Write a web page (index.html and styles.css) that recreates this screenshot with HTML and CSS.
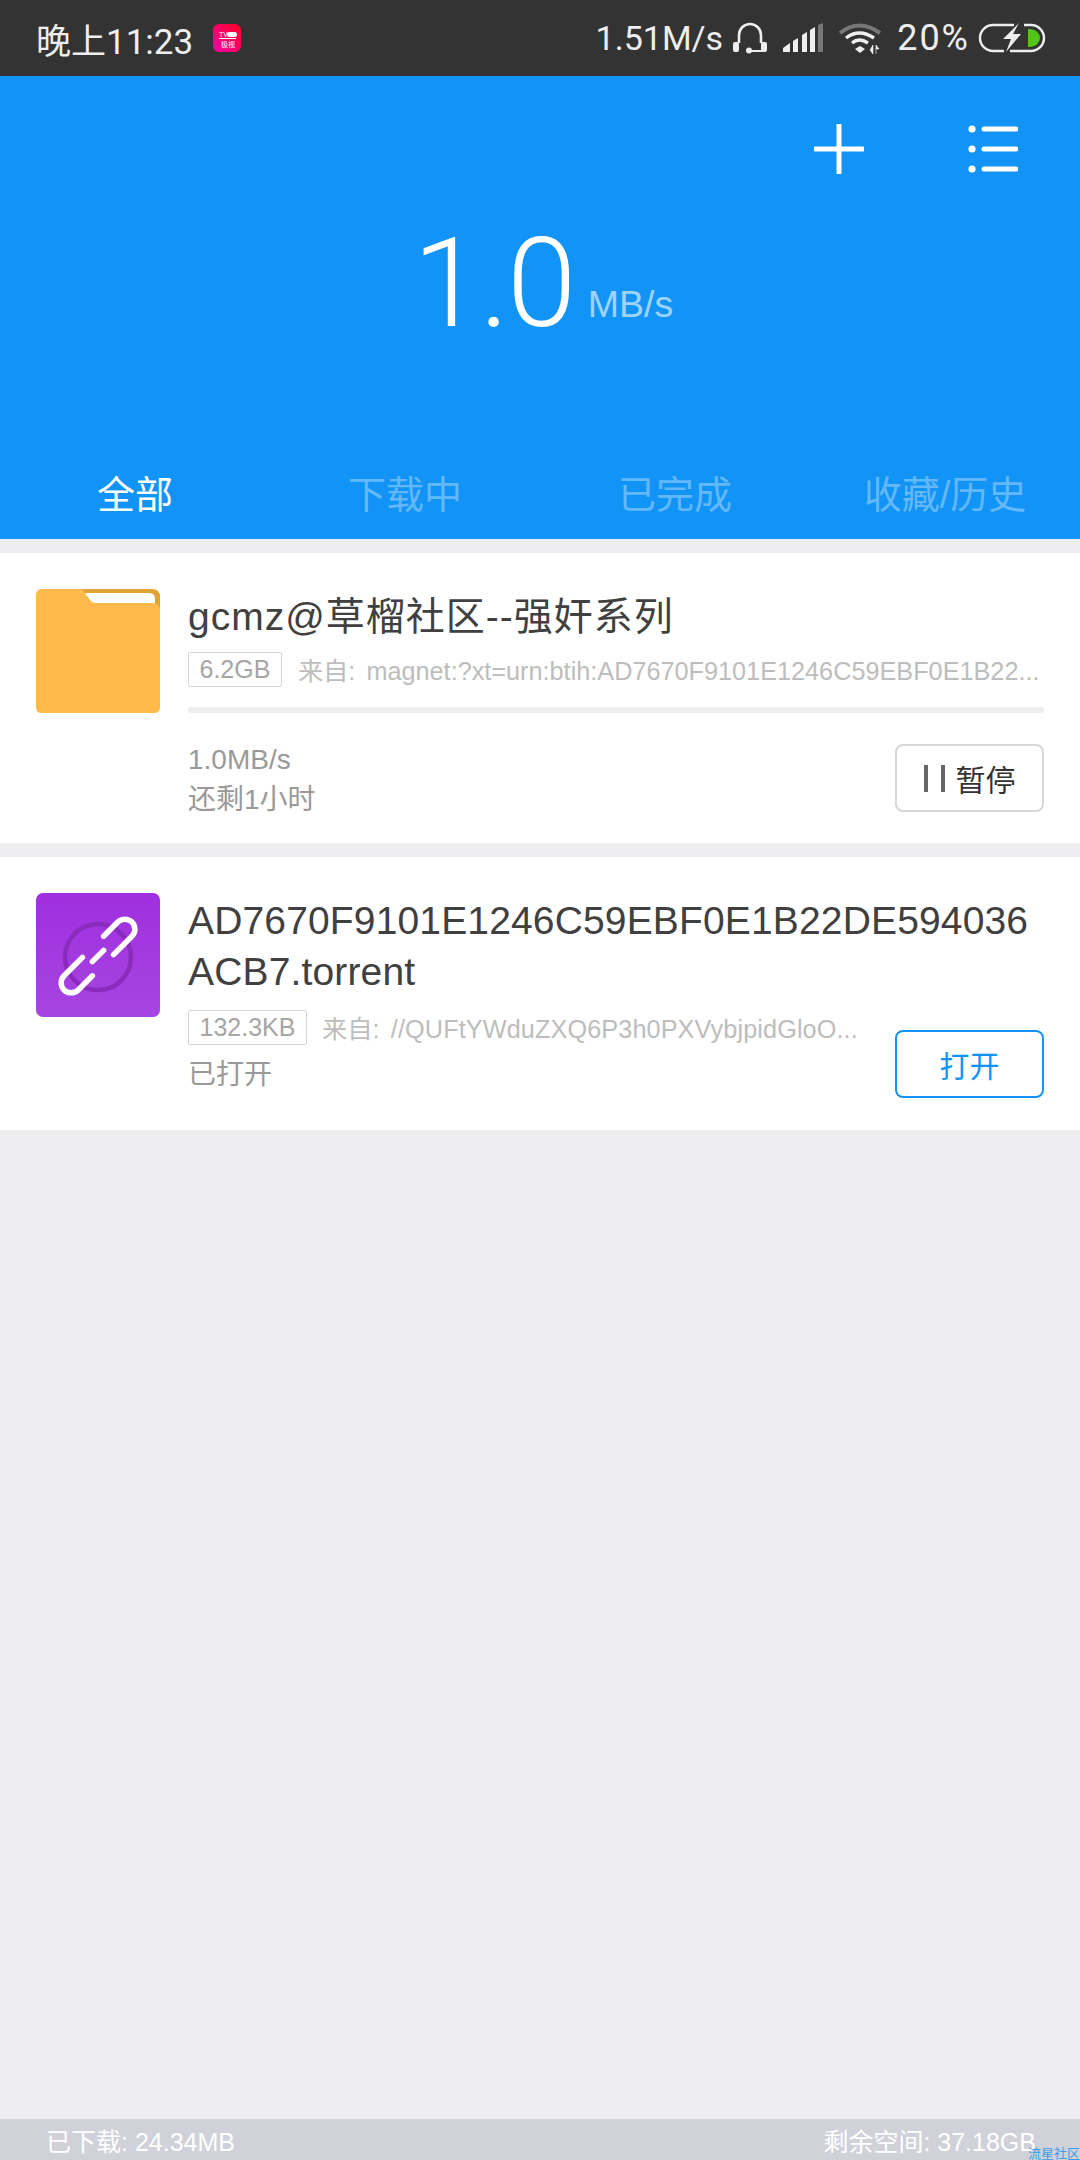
FILE: index.html
```html
<!DOCTYPE html>
<html lang="zh-CN">

<head>
    <meta charset="UTF-8">
    <meta name="viewport" content="width=device-width, initial-scale=1.0">
    <title>下载</title>
    <link rel="stylesheet" href="styles.css">
</head>

<body>
    <div class="page">
        <!-- status bar -->
        <div class="status-bar">
            <span class="status-time">晚上11:23</span>
            <svg class="app-icon" viewBox="0 0 28 28">
                <defs>
                    <linearGradient id="appGrad" x1="0" y1="1" x2="1" y2="0">
                        <stop offset="0" stop-color="#f400a8" />
                        <stop offset="1" stop-color="#ff0022" />
                    </linearGradient>
                </defs>
                <rect width="28" height="28" rx="6" fill="url(#appGrad)" />
                <rect x="14" y="8" width="10" height="5" rx="2.5" fill="#fff" />
                <text x="6" y="13" class="app-icon-text">TV</text>
                <rect x="6" y="14" width="17" height="1" fill="#fff" />
                <text x="8" y="23" class="app-icon-text">极视</text>
            </svg>
            <span class="status-speed">1.51M/s</span>
            <svg class="icon-headset" viewBox="0 0 36 32">
                <path d="M7 21V13a11 11 0 0 1 22 0v8" fill="none" stroke="#eee" stroke-width="2.6" />
                <rect x="1" y="20" width="6" height="10" rx="2" fill="#eee" />
                <rect x="29" y="20" width="6" height="10" rx="2" fill="#eee" />
                <circle cx="17" cy="28.5" r="3" fill="#eee" />
                <path d="M17 29h14" stroke="#eee" stroke-width="2" />
            </svg>
            <svg class="icon-signal" viewBox="0 0 40 30">
                <polygon points="0,29 0,25 7,20 7,29" fill="#eee" />
                <polygon points="10,29 10,18 15,15 15,29" fill="#eee" />
                <polygon points="19,29 19,12 24,9 24,29" fill="#eee" />
                <polygon points="27,29 27,7 32,4 32,29" fill="#eee" />
                <polygon points="35,29 35,2 40,0 40,29" fill="#777" />
            </svg>
            <svg class="icon-wifi" viewBox="0 0 44 32">
                <path d="M2 11Q21 -4 42 11" fill="none" stroke="#777" stroke-width="4" />
                <path d="M8 16Q21 6 36 16" fill="none" stroke="#eee" stroke-width="3.4" />
                <path d="M14 21Q21 15 30 21" fill="none" stroke="#eee" stroke-width="3.4" />
                <path d="M17 27l5-3 5 3-5 4z" fill="#eee" />
                <path d="M35 23v9l-3-4zM38 23l3 4-3 0zM38 26v6" fill="#eee" stroke="#eee" stroke-width=".6" />
            </svg>
            <span class="status-battery">20%</span>
            <svg class="icon-battery" viewBox="0 0 68 30">
                <path d="M36 2H15a13 13 0 0 0 0 26H26M32 28H53a13 13 0 0 0 0-26H46" fill="none" stroke="#eee" stroke-width="2.4" />
                <polygon points="41,0 25,16 33,16 28,29 43,11 35,11" fill="#eee" />
                <path d="M50 6h2a10 9 0 0 1 0 18h-2z" fill="#52c41a" />
            </svg>
        </div>

        <!-- blue header -->
        <div class="header">
            <div class="header-actions">
                <svg class="icon-plus" viewBox="0 0 50 50">
                    <path d="M25 1v48M1 25h48" stroke="#fff" stroke-width="5" stroke-linecap="round" />
                </svg>
                <svg class="icon-menu" viewBox="0 0 50 50">
                    <circle cx="4" cy="5" r="3.6" fill="#fff" />
                    <circle cx="4" cy="25" r="3.6" fill="#fff" />
                    <circle cx="4" cy="45" r="3.6" fill="#fff" />
                    <path d="M16 5h32M16 25h32M16 45h32" stroke="#fff" stroke-width="5" stroke-linecap="round" />
                </svg>
            </div>
            <div class="speed">
                <span class="speed-value">1.0</span>
                <span class="speed-unit">MB/s</span>
            </div>
            <div class="tabs">
                <div class="tab tab-active">全部</div>
                <div class="tab">下载中</div>
                <div class="tab">已完成</div>
                <div class="tab">收藏/历史</div>
            </div>
        </div>

        <!-- task list -->
        <div class="list">
            <div class="card card-folder">
                <svg class="file-icon" viewBox="0 0 124 124">
                    <path d="M40 0H116Q124 0 124 8V30H40z" fill="#e0a435" />
                    <path d="M48 4H113Q119 4 119 10V16H50z" fill="#fff" />
                    <path d="M6 0H46L54 11Q56 14 60 14H116Q124 14 124 22V118Q124 124 118 124H6Q0 124 0 118V6Q0 0 6 0z" fill="#ffba4b" />
                </svg>
                <div class="card-main">
                    <div class="card-title folder-title">gcmz@草榴社区--强奸系列</div>
                    <div class="meta">
                        <span class="size-tag">6.2GB</span>
                        <span class="source">来自: magnet:?xt=urn:btih:AD7670F9101E1246C59EBF0E1B22...</span>
                    </div>
                    <div class="progress"></div>
                    <div class="card-bottom">
                        <div class="stats">
                            <div>1.0MB/s</div>
                            <div>还剩1小时</div>
                        </div>
                        <button class="btn">
                            <span class="pause-icon"></span>
                            暂停
                        </button>
                    </div>
                </div>
            </div>

            <div class="card card-torrent">
                <svg class="file-icon" viewBox="0 0 124 124">
                    <defs>
                        <linearGradient id="linkGrad" x1="0" y1="0" x2="0" y2="1">
                            <stop offset="0" stop-color="#a02fdf" />
                            <stop offset="1" stop-color="#a645e0" />
                        </linearGradient>
                    </defs>
                    <rect width="124" height="124" rx="7" fill="url(#linkGrad)" />
                    <circle cx="62" cy="64" r="33" fill="none" stroke="#8a2bbd" stroke-width="4.5" />
                    <g transform="rotate(-45 62 63)" fill="none" stroke="#fff" stroke-width="5.5" stroke-linecap="round">
                        <path d="M50 53H24a10 10 0 0 0 0 20H44" />
                        <path d="M74 73H100a10 10 0 0 0 0-20H80" />
                        <path d="M54 63H70" />
                    </g>
                </svg>
                <div class="card-grid">
                    <div class="card-title torrent-title">AD7670F9101E1246C59EBF0E1B22DE594036<br>ACB7.torrent</div>
                    <div class="meta torrent-meta">
                        <span class="size-tag">132.3KB</span>
                        <span class="source">来自: //QUFtYWduZXQ6P3h0PXVybjpidGloO...</span>
                    </div>
                    <div class="opened">已打开</div>
                    <button class="btn btn-open">打开</button>
                </div>
            </div>
        </div>

        <!-- storage footer -->
        <div class="footer">
            <span>已下载: 24.34MB</span>
            <span>剩余空间: 37.18GB</span>
            <span class="watermark">流星社区</span>
        </div>
    </div>
</body>

</html>
```

FILE: styles.css
```css
* {
    box-sizing: border-box;
}

body {
    margin: 0;
    font-family: "Liberation Sans", "Noto Sans CJK SC", sans-serif;
}

.page {
    position: relative;
    width: 1080px;
    height: 2160px;
    display: flex;
    flex-direction: column;
    background-color: #eeeef0;
}

/* status bar */
.status-bar {
    height: 76px;
    flex-shrink: 0;
    display: flex;
    align-items: center;
    padding: 0 34px 0 36px;
    background-color: #333333;
    color: #eeeeee;
    font-family: Roboto, "Noto Sans CJK SC", sans-serif;
    font-size: 35px;
}

.status-time {
    width: 150px;
    white-space: nowrap;
}

.app-icon {
    width: 28px;
    height: 28px;
    margin-left: 27px;
}

.app-icon-text {
    font-size: 7px;
    fill: #fff;
}

.status-speed {
    margin-left: auto;
    font-size: 34px;
}

.icon-headset {
    width: 36px;
    height: 32px;
    margin-left: 9px;
}

.icon-signal {
    width: 40px;
    height: 30px;
    margin-left: 15px;
}

.icon-wifi {
    width: 44px;
    height: 32px;
    margin-left: 15px;
}

.status-battery {
    margin-left: 15px;
    font-size: 36px;
    letter-spacing: 2px;
}

.icon-battery {
    width: 68px;
    height: 30px;
    margin-left: 8px;
}

/* header */
.header {
    height: 463px;
    flex-shrink: 0;
    display: flex;
    flex-direction: column;
    background-color: #1294f6;
    color: #ffffff;
}

.header-actions {
    display: flex;
    justify-content: flex-end;
    gap: 104px;
    padding: 48px 62px 0 0;
}

.icon-plus,
.icon-menu {
    width: 50px;
    height: 50px;
}

.speed {
    display: flex;
    align-items: flex-end;
    justify-content: center;
    margin-top: 45px;
    padding-left: 6px;
}

.speed-value {
    font-family: Roboto, sans-serif;
    font-weight: 300;
    font-size: 125px;
    line-height: 130px;
    letter-spacing: -2.5px;
}

.speed-unit {
    margin-left: 14px;
    padding-bottom: 24px;
    font-size: 37.5px;
    line-height: 42px;
    color: rgba(255, 255, 255, 0.6);
}

.tabs {
    display: grid;
    grid-template-columns: repeat(4, 1fr);
    margin-top: auto;
    padding-bottom: 20px;
}

.tab {
    text-align: center;
    font-size: 38px;
    line-height: 48px;
    color: rgba(255, 255, 255, 0.35);
}

.tab-active {
    color: #ffffff;
}

/* list */
.list {
    flex: 1;
    padding-top: 14px;
    display: flex;
    flex-direction: column;
    gap: 14px;
}

.card {
    display: flex;
    gap: 28px;
    padding: 36px 36px 0;
    background-color: #ffffff;
}

.card-folder {
    height: 290px;
}

.card-torrent {
    height: 273px;
}

.file-icon {
    width: 124px;
    height: 124px;
    flex-shrink: 0;
}

.card-main {
    flex: 1;
    min-width: 0;
}

.card-title {
    margin-top: 2px;
    font-size: 39px;
    line-height: 51px;
    color: #404040;
    white-space: nowrap;
}

.folder-title {
    letter-spacing: 1px;
}

.meta {
    display: flex;
    align-items: center;
    margin-top: 9px;
    white-space: nowrap;
}

.torrent-meta {
    margin-top: 12px;
}

.size-tag {
    height: 35px;
    line-height: 33px;
    padding: 0 10.5px;
    border: 1px solid #d5d5d5;
    border-radius: 2px;
    font-size: 25px;
    color: #a6a6a6;
}

.source {
    margin-left: 16px;
    font-size: 25.25px;
    word-spacing: 4px;
    color: #bdbdbd;
}

.torrent-meta .source {
    margin-left: 15px;
    letter-spacing: 0.1px;
}

.torrent-title {
    grid-column: 1 / 3;
    letter-spacing: 0.15px;
}

.progress {
    height: 6px;
    margin-top: 20px;
    border-radius: 3px;
    background-color: #eeeeee;
}

.card-bottom {
    display: flex;
    justify-content: space-between;
    align-items: flex-start;
    margin-top: 31px;
}

.stats {
    margin-top: -4px;
    font-size: 28px;
    line-height: 40px;
    color: #999999;
}

.btn {
    width: 149px;
    height: 68px;
    display: flex;
    align-items: center;
    justify-content: center;
    padding: 0;
    border: 2px solid #d8d8d8;
    border-radius: 8px;
    background-color: #ffffff;
    font-family: inherit;
    font-size: 30px;
    color: #333333;
}

.pause-icon {
    width: 21px;
    height: 27px;
    margin-right: 11px;
    border-left: 4px solid #666666;
    border-right: 4px solid #666666;
}

.btn-open {
    grid-column: 2;
    grid-row: 2 / 4;
    align-self: end;
    border-color: #1294f6;
    color: #1294f6;
}

.card-grid {
    flex: 1;
    min-width: 0;
    display: grid;
    grid-template-columns: 1fr 149px;
    grid-template-rows: auto auto auto;
    align-content: start;
}

.opened {
    margin-top: 10px;
    padding-bottom: 3px;
    font-size: 28px;
    line-height: 40px;
    color: #999999;
}

/* footer */
.footer {
    height: 41px;
    flex-shrink: 0;
    display: flex;
    justify-content: space-between;
    align-items: center;
    padding: 0 44px 0 46px;
    background-color: #d0d1d9;
    color: #ffffff;
    font-size: 25px;
}

.watermark {
    position: absolute;
    right: 0;
    bottom: 0;
    font-size: 13px;
    line-height: 13px;
    color: #3a9cf0;
}
```
